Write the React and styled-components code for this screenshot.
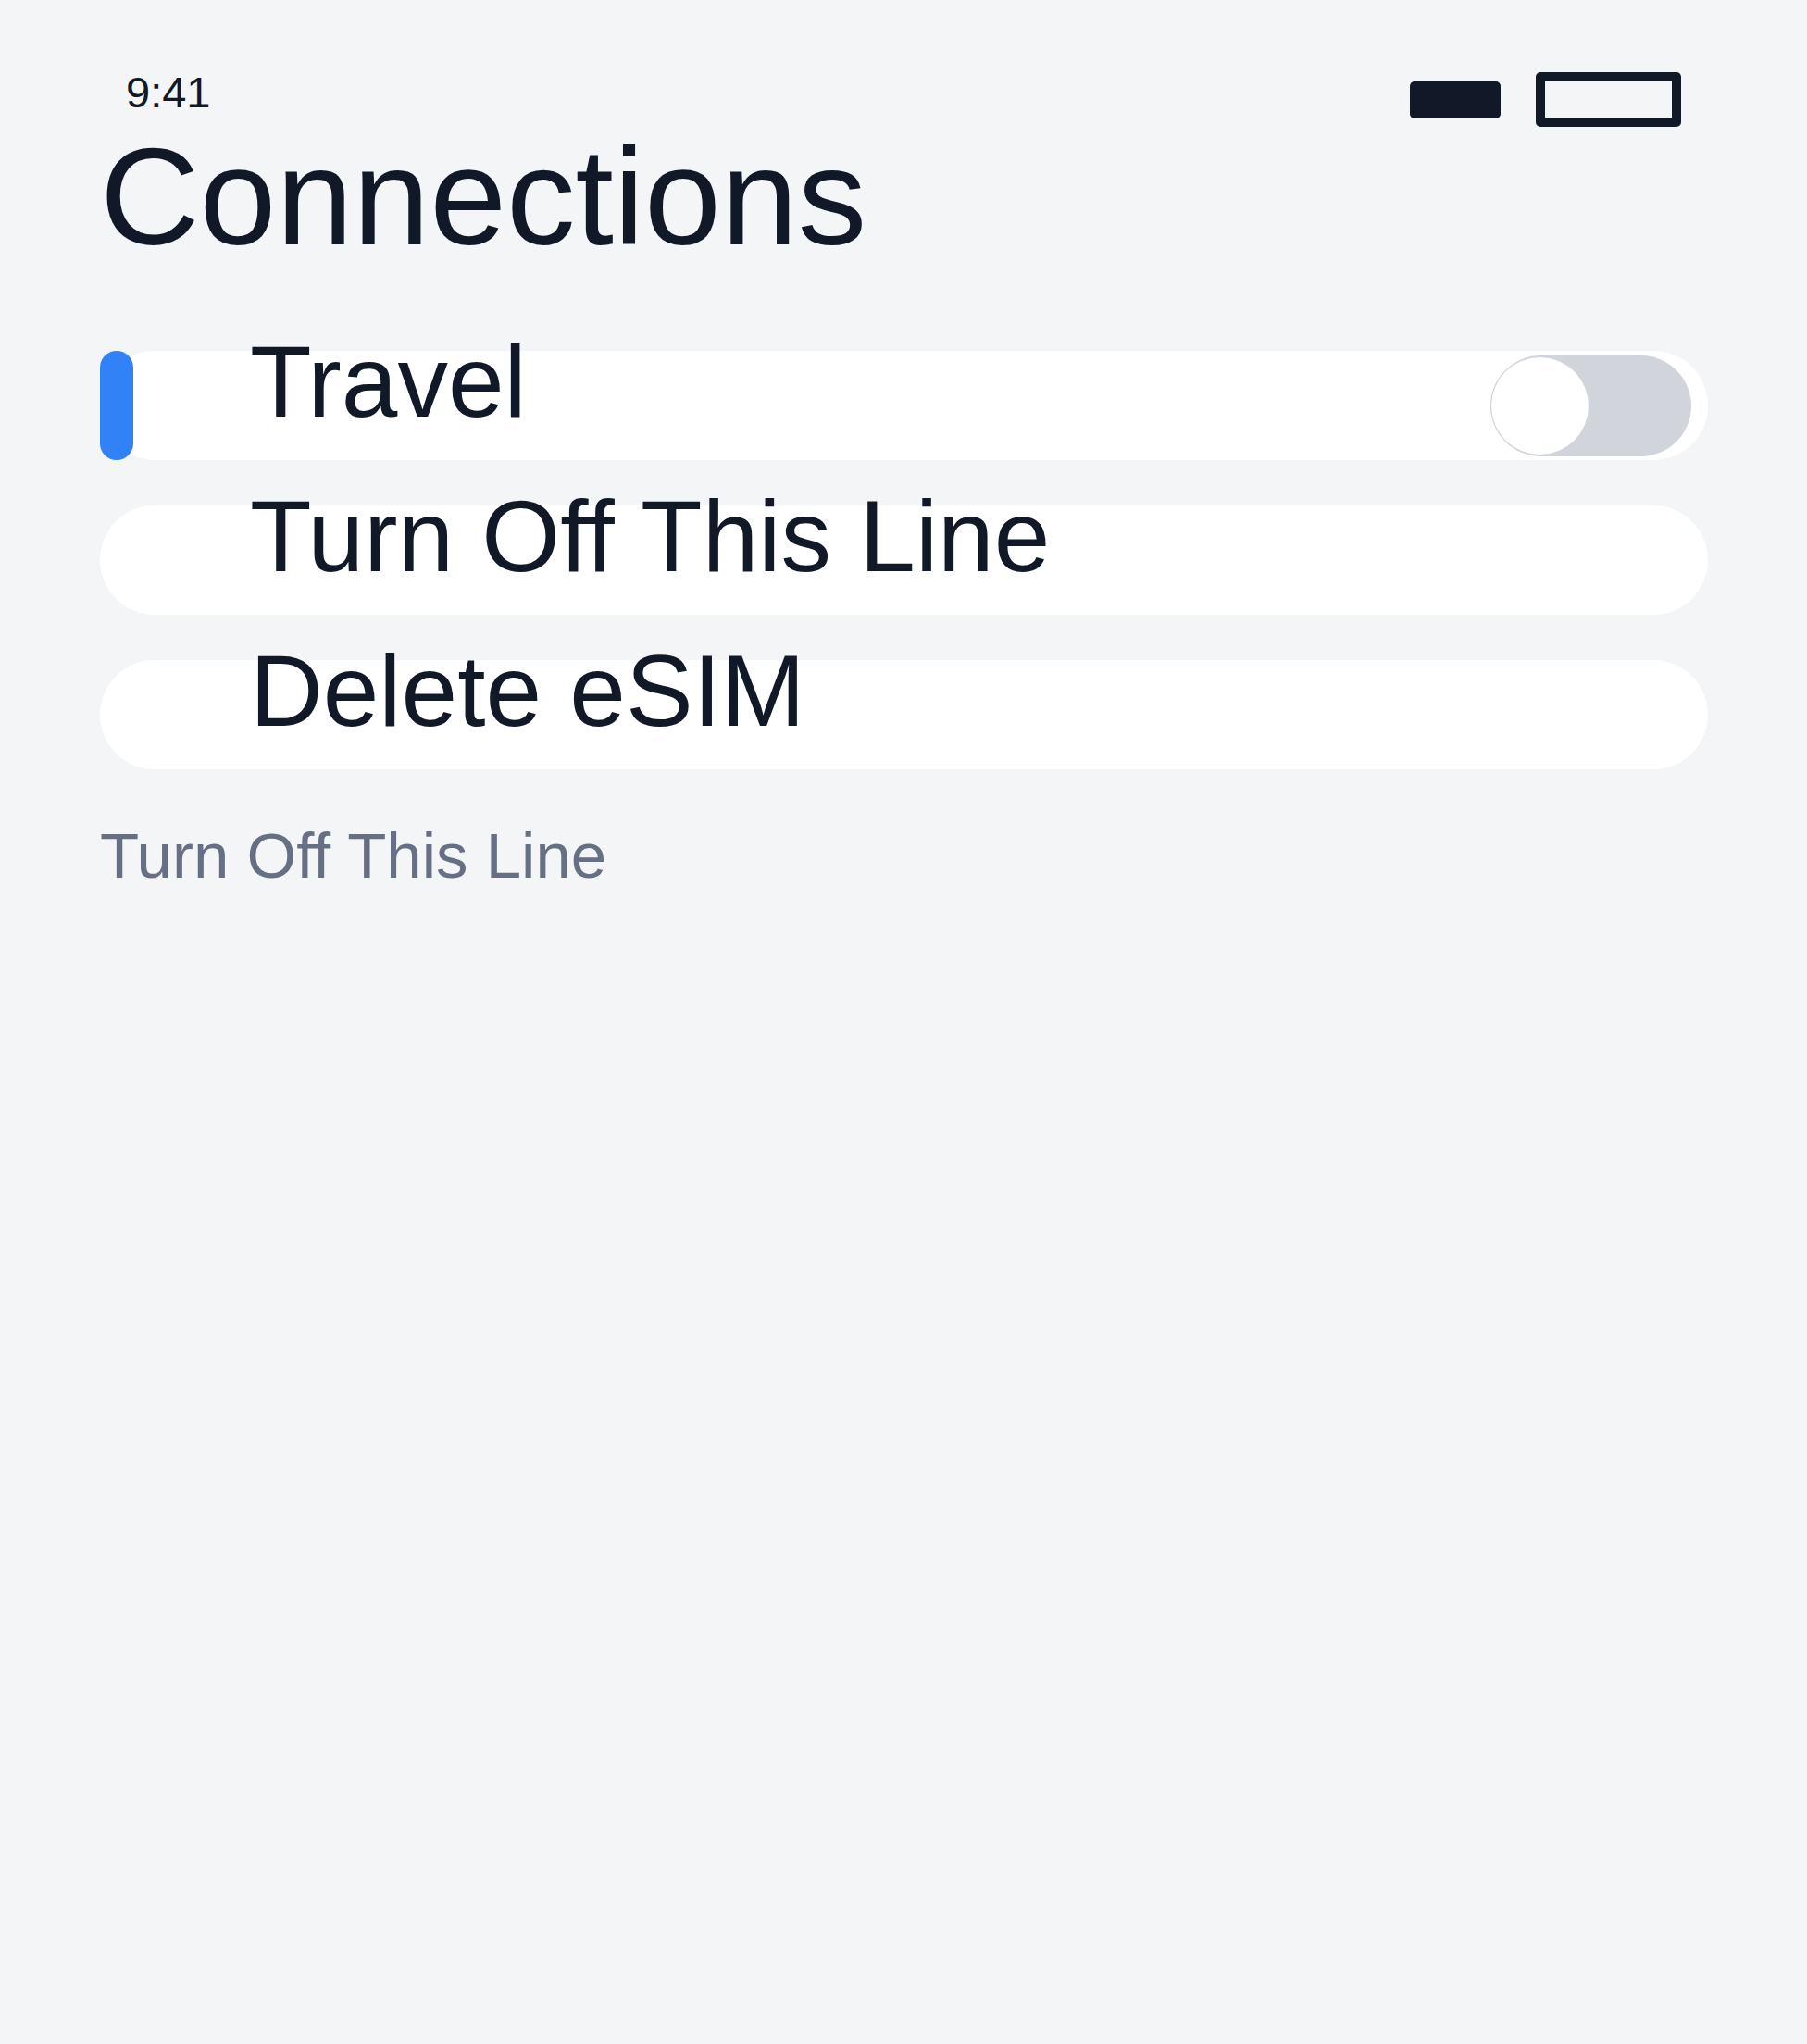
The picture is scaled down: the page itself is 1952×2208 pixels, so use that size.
import React from "react";
import styled, { createGlobalStyle } from "styled-components";

const GlobalStyle = createGlobalStyle`
  html, body {
    margin: 0;
    padding: 0;
    background: #f4f5f7;
  }
  body {
    font-family: "Liberation Sans", Arial, Helvetica, sans-serif;
    color: #111827;
  }
`;

const Screen = styled.div`
  min-height: 2208px;
  box-sizing: border-box;
  padding: 72px 107px 0 108px;
  background: #f4f5f7;
  display: flex;
  flex-direction: column;
`;

const StatusBar = styled.div`
  height: 55px;
  display: flex;
  justify-content: space-between;
  align-items: flex-start;
  padding: 0 29px 0 28px;
`;

const Time = styled.span`
  font-size: 47px;
  line-height: 55px;
  color: #111827;
`;

const StatusIcons = styled.div`
  display: flex;
  align-items: center;
  gap: 38px;
  margin-top: 6px;
  height: 59px;
`;

const Signal = styled.div`
  width: 98px;
  height: 40px;
  border-radius: 5px;
  background: #111827;
`;

const Battery = styled.div`
  width: 157px;
  height: 59px;
  box-sizing: border-box;
  border: 10px solid #111827;
  border-radius: 5px;
`;

const Title = styled.h1`
  margin: 0 0 80px;
  font-size: 149px;
  font-weight: 400;
  line-height: 172px;
  color: #111827;
`;

const List = styled.div`
  display: flex;
  flex-direction: column;
  gap: 49px;
`;

const Row = styled.div`
  position: relative;
  height: 118px;
  display: flex;
  align-items: flex-start;
  justify-content: space-between;
  padding: 0 18px 0 162px;
  background: #ffffff;
  border-radius: 59px;
`;

const ActiveBar = styled.span`
  position: absolute;
  left: 0;
  top: 0;
  width: 36px;
  height: 100%;
  border-radius: 18px;
  background: #3182f6;
`;

const Label = styled.span`
  margin-top: -21px;
  font-size: 109px;
  line-height: 1;
  color: #111827;
  white-space: nowrap;
`;

const Track = styled.div`
  align-self: center;
  width: 217px;
  height: 109px;
  border-radius: 55px;
  background: ${(p) => (p.$on ? "#3182f6" : "#d1d5db")};
  display: flex;
  align-items: center;
  justify-content: ${(p) => (p.$on ? "flex-end" : "flex-start")};
`;

const Knob = styled.div`
  width: 107px;
  height: 107px;
  box-sizing: border-box;
  border-radius: 50%;
  background: #ffffff;
  border: 1px solid #cfd4da;
`;

const Caption = styled.p`
  margin: 54px 0 0;
  font-size: 69px;
  line-height: normal;
  color: #667085;
`;

const rows = [
  { label: "Travel", active: true, toggle: true },
  { label: "Turn Off This Line" },
  { label: "Delete eSIM" },
];

export default function App() {
  return (
    <>
      <GlobalStyle />
      <Screen>
        <StatusBar>
          <Time>9:41</Time>
          <StatusIcons>
            <Signal />
            <Battery />
          </StatusIcons>
        </StatusBar>
        <Title>Connections</Title>
        <List>
          {rows.map((row) => (
            <Row key={row.label}>
              {row.active && <ActiveBar />}
              <Label>{row.label}</Label>
              {row.toggle && (
                <Track $on={false}>
                  <Knob />
                </Track>
              )}
            </Row>
          ))}
        </List>
        <Caption>Turn Off This Line</Caption>
      </Screen>
    </>
  );
}
